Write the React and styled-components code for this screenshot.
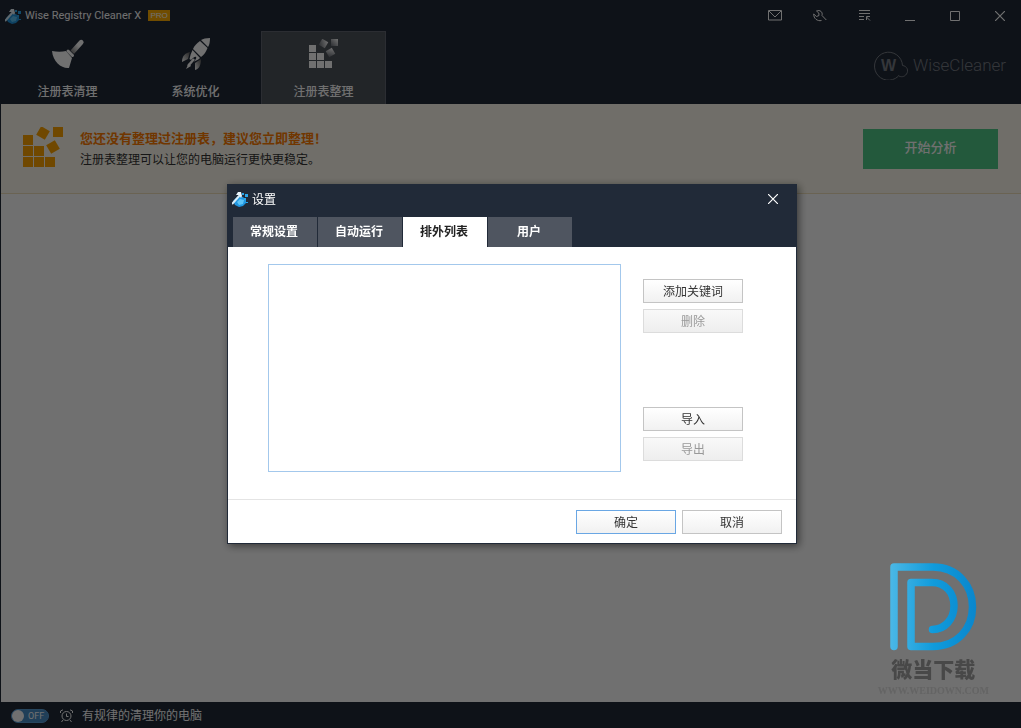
import React from "react";
import styled, { createGlobalStyle } from "styled-components";

const Global = createGlobalStyle`
  * { box-sizing: border-box; }
  body { margin: 0; background: #fff; }
  body, button, select { font-family: "Noto Sans", "Noto Sans CJK SC", sans-serif; font-size: 12px; }
  button { padding: 0; margin: 0; cursor: pointer; }
  svg { display: block; flex: none; }
`;

const navy = "#212a38";

const Window = styled.div`
  min-height: 100vh;
  display: flex;
  flex-direction: column;
`;

const Header = styled.header`
  background: ${navy};
  color: #fff;
`;

const TitleBar = styled.div`
  display: flex;
  align-items: center;
  height: 31px;
  padding-left: 5px;
`;

const AppTitle = styled.h1`
  margin: 0 0 0 4px;
  font-family: Roboto, sans-serif;
  font-size: 11px;
  font-weight: 400;
  line-height: 16px;
`;

const ProBadge = styled.span`
  margin-left: 7px;
  width: 22px;
  height: 11px;
  background: #ffae00;
  color: #fff;
  font-family: "Liberation Sans", sans-serif;
  font-size: 8px;
  line-height: 11px;
  text-align: center;
`;

const WindowControls = styled.div`
  display: flex;
  gap: 3px;
  margin-left: auto;
`;

const ControlButton = styled.button`
  display: flex;
  align-items: center;
  justify-content: center;
  width: 42px;
  height: 30px;
  border: 0;
  background: none;
  color: #fff;
`;

const Ribbon = styled.div`
  display: flex;
  justify-content: space-between;
  height: 73px;
  padding: 0 15px 0 5px;
`;

const Nav = styled.nav`
  display: flex;
  gap: 3px;
`;

const NavButton = styled.button`
  display: flex;
  flex-direction: column;
  align-items: center;
  gap: 14px;
  width: 125px;
  padding-top: 6px;
  border: 1px solid ${(p) => (p.$active ? "#626873" : "transparent")};
  border-bottom: 0;
  background: ${(p) => (p.$active ? "#4f545c" : "none")};
  color: #fff;
  font-weight: 500;
  line-height: 16px;
`;

const NavIcon = styled.span`
  display: flex;
  align-items: center;
  justify-content: center;
  height: 32px;
`;

const Brand = styled.div`
  display: flex;
  align-items: center;
  gap: 5px;
  padding-bottom: 6px;
  color: #777c84;
  font-family: Roboto, sans-serif;
  font-size: 17px;
  font-weight: 300;
`;

const Content = styled.main`
  flex: 1;
  border: 1px solid ${navy};
  border-width: 0 0 0 1px;
`;

const Banner = styled.section`
  display: flex;
  align-items: center;
  height: 90px;
  padding: 0 23px 0 22px;
  background: #fffbee;
  border-bottom: 1px solid #f1e2bd;
`;

const BannerIcon = styled.span`
  padding-bottom: 4px;
`;

const BannerText = styled.div`
  margin-left: 17px;
`;

const BannerTitle = styled.h2`
  margin: 0;
  color: #ff7b00;
  font-size: 13px;
  font-weight: 600;
  line-height: 22px;
`;

const BannerNote = styled.p`
  margin: 0;
  color: #333;
  line-height: 22px;
`;

const AnalyzeButton = styled.button`
  width: 135px;
  height: 40px;
  margin-left: auto;
  padding-bottom: 4px;
  border: 0;
  background: #50ca88;
  color: #fff;
  font-size: 13px;
  font-weight: 500;
`;

const StatusBar = styled.footer`
  display: flex;
  align-items: center;
  height: 26px;
  padding: 1px 11px 0;
  background: ${navy};
  color: #fff;
`;

const Toggle = styled.input`
  appearance: none;
  display: flex;
  align-items: center;
  width: 38px;
  height: 14px;
  margin: 0 11px 0 0;
  border: 1px solid #5a9fd8;
  border-radius: 7px;
  background: #4a8fc8;
  color: #fff;
  &::before {
    content: "";
    width: 12px;
    height: 12px;
    border-radius: 50%;
    background: #fff;
  }
  &::after {
    content: "OFF";
    margin-left: 4px;
    font: 9px/12px Roboto, sans-serif;
  }
`;

const StatusLabel = styled.label`
  display: flex;
  align-items: center;
  gap: 9px;
  line-height: 16px;
`;

const Overlay = styled.div`
  position: fixed;
  inset: 0;
  display: flex;
  align-items: center;
  justify-content: center;
  padding-left: 3px;
  background: rgba(0, 0, 0, 0.56);
`;

const Dialog = styled.div`
  width: 570px;
  max-width: 100%;
  border: 1px solid ${navy};
  background: #fff;
  box-shadow: 2px 2px 8px rgba(0, 0, 0, 0.5);
`;

const DialogHeader = styled.div`
  background: ${navy};
  color: #fff;
`;

const DialogTitleBar = styled.div`
  display: flex;
  align-items: center;
  justify-content: space-between;
  height: 32px;
  padding: 0 2px 4px 4px;
`;

const DialogTitle = styled.h2`
  display: flex;
  align-items: center;
  gap: 4px;
  margin: 0;
  font-size: 12px;
  font-weight: 400;
`;

const TabList = styled.div`
  display: flex;
  gap: 1px;
  padding-left: 5px;
`;

const Tab = styled.button`
  width: 84px;
  height: 30px;
  padding: 0 2px 2px 0;
  border: 0;
  background: ${(p) => (p.$active ? "#fff" : "#4f5560")};
  color: ${(p) => (p.$active ? "#222" : "#fff")};
  font-weight: 600;
`;

const DialogBody = styled.div`
  display: flex;
  gap: 22px;
  padding: 17px 53px 27px 40px;
`;

const KeywordList = styled.select`
  appearance: none;
  flex: 1;
  height: 208px;
  border: 1px solid #a3c8ec;
  border-radius: 0;
  background: #fff;
  outline: 0;
`;

const SideActions = styled.div`
  display: flex;
  flex-direction: column;
  justify-content: space-between;
  padding: 15px 0 11px;
`;

const ActionPair = styled.div`
  display: flex;
  flex-direction: column;
  gap: 6px;
`;

const PushButton = styled.button`
  width: 100px;
  height: 24px;
  padding-bottom: 1px;
  border: 1px solid ${(p) => (p.$primary ? "#6aa7e4" : "#c4c4c4")};
  background: linear-gradient(#fff, #f1f1f1);
  color: #333;
  &:disabled {
    border-color: #dcdcdc;
    background: linear-gradient(#f9f9f9, #eee);
    color: #999;
  }
`;

const DialogFooter = styled.div`
  display: flex;
  justify-content: flex-end;
  gap: 6px;
  padding: 10px 14px 9px;
  border-top: 1px solid #e4e4e4;
`;

const Watermark = styled.div`
  position: fixed;
  right: 32px;
  bottom: 31px;
  display: flex;
  flex-direction: column;
  align-items: center;
  color: #484848;
`;

const WatermarkName = styled.div`
  font-family: "Noto Sans CJK SC", sans-serif;
  font-size: 21px;
  font-weight: 900;
  line-height: 34px;
`;

const WatermarkUrl = styled.div`
  color: #646464;
  font-family: "Liberation Serif", serif;
  font-size: 10px;
  font-weight: 700;
  line-height: 12px;
`;

const AppIcon = () => (
  <svg width="16" height="16" viewBox="0 0 16 16" aria-hidden="true">
    <path d="M1 10 4 7 7 5 11 6 14 9 14 12 11 15 7 16 3 14Z" fill="#2196e0" />
    <path d="M5 11 8 8 12 9 11 13 7 14Z" fill="#5cc4f8" />
    <path d="M0 13 8 4" stroke="#d9ecf8" strokeWidth="2" />
    <path d="M4 4 6 1 9 1 10 5 9 7 7 4Z" fill="#e8f4fb" />
    <path d="M10 2h2v2h-2zM13 3h3v3h-3zM12 7h2v2h-2zM14 11h2v1h-2z" fill="#2ba6ea" />
  </svg>
);

const BroomIcon = () => (
  <svg width="34" height="32" viewBox="0 0 34 32" aria-hidden="true">
    <defs>
      <linearGradient id="handle" x1="0" y1="1" x2="1" y2="0">
        <stop offset="0" stopColor="#666" /><stop offset=".6" stopColor="#fff" />
      </linearGradient>
    </defs>
    <path d="M19.500 12.500 28.500 2.500a2.400 2.400 0 0 1 3.400 3.400L23 16Z" fill="url(#handle)" />
    <path d="M1 13C6 14 11 14 15 13L21 20C20 23 19 27 18 30C11 31 2 24 1 13Z" fill="#fff" />
    <path d="M17 13 21.500 17.500" stroke="#fff" strokeWidth="3" strokeLinecap="round" />
  </svg>
);

const RocketIcon = () => (
  <svg width="30" height="32" viewBox="0 0 30 32" aria-hidden="true">
    <defs>
      <linearGradient id="fin" x1="0" y1="1" x2="1" y2="0">
        <stop offset="0" stopColor="#fff" /><stop offset="1" stopColor="#555" />
      </linearGradient>
    </defs>
    <path d="M29 0C25 0 22 .7 20 2L27 9C28.500 7 29 3 29 0Z" fill="#fff" />
    <path d="M19 3C16 5 13 8 12 11L20 19C23 17 25 14 26.500 10Z" fill="#fff" />
    <path d="M11.500 12C10 15 9 18 8.500 21L10 22C12 20 14 18 15 19C16 20 14 22 13 24L14 23C17 22 18 21 19 20Z" fill="#fff" />
    <path d="M9 14C4 15 1 18 1 24L7 21Z" fill="url(#fin)" />
    <path d="M20 21C20 27 18 31 14 32L14 25Z" fill="url(#fin)" />
    <path d="M13 21 7 28" stroke="#fff" strokeWidth="2.500" />
    <path d="M8 25 5 31 10 28Z" fill="#fff" />
  </svg>
);

const BlocksIcon = ({ size, color, fade }) => (
  <svg width={size} height={size} viewBox="0 0 40 40" aria-hidden="true">
    <defs>
      <linearGradient id="blockFade" x1="0" y1="1" x2="1" y2="0">
        <stop offset="0" stopColor="#555b63" /><stop offset="1" stopColor="#fff" />
      </linearGradient>
    </defs>
    <path d="M0 8h10v10H0zM0 19h10v10H0zM11 19h10v10H11zM0 30h10v10H0zM11 30h10v10H11zM22 30h10v10H22z" fill={color} />
    <g fill={fade ? "url(#blockFade)" : color}>
      <path d="M30 0h10v10H30z" />
      <path d="M15 1h10v10H15z" transform="rotate(30 20 6)" />
      <path d="M25 15h10v10H25z" transform="rotate(-30 30 20)" />
    </g>
  </svg>
);

const SmallBlocksIcon = () => (
  <svg width="30" height="30" viewBox="0 0 30 30" aria-hidden="true">
    <path d="M0 6h7v7H0zM0 14h7v7H0zM8 14h7v7H8zM0 22h7v7H0zM8 22h7v7H8zM16 22h7v7h-7z" fill="#fff" />
    <g fill="url(#smallFade)">
      <path d="M22 0h7v7h-7z" />
      <path d="M11 1h7v7h-7z" transform="rotate(30 14.500 4.500)" />
      <path d="M18 10h7v7h-7z" transform="rotate(-30 21.500 13.500)" />
    </g>
    <defs>
      <linearGradient id="smallFade" x1="0" y1="1" x2="1" y2="0">
        <stop offset="0" stopColor="#666b73" /><stop offset="1" stopColor="#fff" />
      </linearGradient>
    </defs>
  </svg>
);

const line = { fill: "none", stroke: "currentColor" };

const MailIcon = () => (
  <svg width="14" height="11" viewBox="0 0 14 11" {...line}>
    <path d="M.5.5h13v9.500H.5zM1 1l6 6 6-6" />
  </svg>
);

const WrenchIcon = () => (
  <svg width="14" height="12" viewBox="0 0 14 12" {...line}>
    <path d="M8.500 10.500C4.500 11.500 .5 8.500 .7 4L3.500 6.500 6 5.500 5.800 3 3.500 1C7 -.5 10 2 9 5.500L13.300 10" />
  </svg>
);

const MenuIcon = () => (
  <svg width="12" height="11" viewBox="0 0 12 11" {...line}>
    <path d="M0 .5h11M0 3.500h11M0 6.500h5M0 9.500h5M11 10.500 7.500 7M7.500 10V6.500H11" />
  </svg>
);

const MinimizeIcon = () => (
  <svg width="10" height="10" viewBox="0 0 10 10" {...line}><path d="M0 9.500h10" /></svg>
);

const MaximizeIcon = () => (
  <svg width="10" height="10" viewBox="0 0 10 10" {...line}><path d="M.5.5h9v9h-9z" /></svg>
);

const CloseIcon = () => (
  <svg width="10" height="10" viewBox="0 0 10 10" {...line} strokeWidth="1.200">
    <path d="M0 0 10 10M10 0 0 10" />
  </svg>
);

const BrandIcon = () => (
  <svg width="34" height="30" viewBox="0 0 34 30" {...line}>
    <path d="M24 26.500A14 14 0 1 1 28.500 15.500C33 16 35 20.500 32.500 24C30.500 27 27 27.500 24 25.500" />
    <text x="14.500" y="20.500" textAnchor="middle" fill="currentColor" stroke="none" fontFamily="Liberation Sans, sans-serif" fontSize="16" fontWeight="700">W</text>
  </svg>
);

const AlarmIcon = () => (
  <svg width="13" height="14" viewBox="0 0 13 14" {...line}>
    <circle cx="6.500" cy="7" r="4.500" />
    <path d="M6.500 4.500V7.500H8.500M.5 4V2L3 .8M12.500 4V2L10 .8M3 11 1.500 13M10 11l1.500 2" />
  </svg>
);

const WatermarkIcon = () => (
  <svg width="87" height="88" viewBox="0 0 87 88" fill="none" aria-hidden="true">
    <defs>
      <linearGradient id="mark" gradientUnits="userSpaceOnUse" x1="0" y1="0" x2="87" y2="0">
        <stop offset="0" stopColor="#4bb8e6" /><stop offset=".5" stopColor="#109bdc" /><stop offset="1" stopColor="#0a86cc" />
      </linearGradient>
    </defs>
    <path d="M4 83.500V4H43C67 4 82.500 22 82.500 44S67 83.500 43 83.500H21V19.500H42C56 19.500 64 30 64 43S55 66.500 42.500 66.500" stroke="url(#mark)" strokeWidth="7.500" strokeLinecap="round" strokeLinejoin="round" />
  </svg>
);

const navItems = [
  { label: "注册表清理", icon: <BroomIcon /> },
  { label: "系统优化", icon: <RocketIcon /> },
  { label: "注册表整理", icon: <SmallBlocksIcon />, active: true },
];

const controls = [
  ["邮件", MailIcon],
  ["工具", WrenchIcon],
  ["菜单", MenuIcon],
  ["最小化", MinimizeIcon],
  ["最大化", MaximizeIcon],
  ["关闭", CloseIcon],
];

const tabs = ["常规设置", "自动运行", "排外列表", "用户"];

export default function App() {
  const [tab, setTab] = React.useState("排外列表");
  return (
    <>
      <Global />
      <Window>
        <Header>
          <TitleBar>
            <AppIcon />
            <AppTitle>Wise Registry Cleaner X</AppTitle>
            <ProBadge>PRO</ProBadge>
            <WindowControls>
              {controls.map(([label, Icon]) => (
                <ControlButton key={label} aria-label={label}><Icon /></ControlButton>
              ))}
            </WindowControls>
          </TitleBar>
          <Ribbon>
            <Nav>
              {navItems.map((item) => (
                <NavButton key={item.label} $active={item.active}>
                  <NavIcon>{item.icon}</NavIcon>
                  {item.label}
                </NavButton>
              ))}
            </Nav>
            <Brand><BrandIcon />WiseCleaner</Brand>
          </Ribbon>
        </Header>
        <Content>
          <Banner>
            <BannerIcon><BlocksIcon size={40} color="#ffa500" /></BannerIcon>
            <BannerText>
              <BannerTitle>您还没有整理过注册表，建议您立即整理！</BannerTitle>
              <BannerNote>注册表整理可以让您的电脑运行更快更稳定。</BannerNote>
            </BannerText>
            <AnalyzeButton>开始分析</AnalyzeButton>
          </Banner>
        </Content>
        <StatusBar>
          <Toggle type="checkbox" role="switch" id="schedule" />
          <StatusLabel htmlFor="schedule"><AlarmIcon />有规律的清理你的电脑</StatusLabel>
        </StatusBar>
      </Window>
      <Overlay>
        <Dialog role="dialog" aria-modal="true" aria-labelledby="settings-title">
          <DialogHeader>
            <DialogTitleBar>
              <DialogTitle id="settings-title"><AppIcon />设置</DialogTitle>
              <ControlButton aria-label="关闭"><CloseIcon /></ControlButton>
            </DialogTitleBar>
            <TabList role="tablist">
              {tabs.map((name) => (
                <Tab key={name} role="tab" aria-selected={tab === name} $active={tab === name} onClick={() => setTab(name)}>
                  {name}
                </Tab>
              ))}
            </TabList>
          </DialogHeader>
          <DialogBody>
            <KeywordList multiple aria-label="排外列表" />
            <SideActions>
              <ActionPair>
                <PushButton>添加关键词</PushButton>
                <PushButton disabled>删除</PushButton>
              </ActionPair>
              <ActionPair>
                <PushButton>导入</PushButton>
                <PushButton disabled>导出</PushButton>
              </ActionPair>
            </SideActions>
          </DialogBody>
          <DialogFooter>
            <PushButton $primary>确定</PushButton>
            <PushButton>取消</PushButton>
          </DialogFooter>
        </Dialog>
      </Overlay>
      <Watermark>
        <WatermarkIcon />
        <WatermarkName>微当下载</WatermarkName>
        <WatermarkUrl>WWW.WEIDOWN.COM</WatermarkUrl>
      </Watermark>
    </>
  );
}
